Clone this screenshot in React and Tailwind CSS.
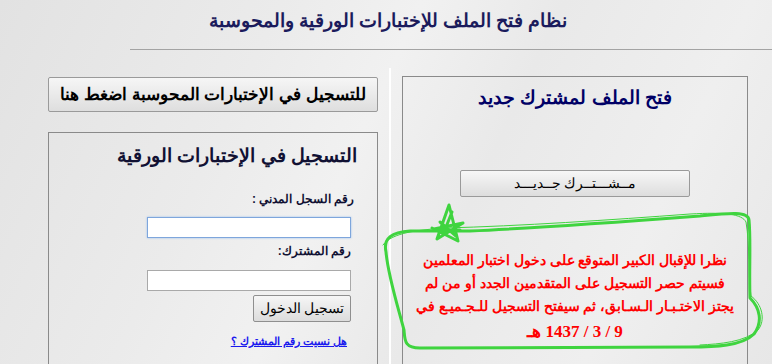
export default function App() {
  return (
    <div
      dir="rtl"
      className="relative w-[772px] h-[364px] overflow-hidden bg-[linear-gradient(115deg,#e2e2e2_0%,#ebebeb_30%,#f1f1f1_45%,#e9e9e9_60%,#efefef_80%,#e7e7e7_100%)] font-['Liberation_Sans',sans-serif]"
    >
      {/* Header */}
      <div className="pt-[8px] pl-[4px] text-center text-[18.5px] leading-[26px] font-bold text-[#1b1b5c]">
        نظام فتح الملف للإختبارات الورقية والمحوسبة
      </div>
      <div dir="ltr" className="mt-[15px] ml-[76px] w-[642px] h-px bg-[#a3a3a3]"></div>

      {/* Columns */}
      <div dir="ltr" className="mt-[26px] flex">
        {/* Left column */}
        <div dir="rtl" className="ml-[48px] w-[330px] pt-px">
          <button className="w-full h-[35px] border border-[#9a9a9a] rounded-[2px] bg-[linear-gradient(#f6f6f6,#dedede)] text-[17px] font-bold text-black">
            للتسجيل في الإختبارات المحوسبة اضغط هنا
          </button>

          <div className="mt-[20px] h-[240px] border border-b-0 border-[#8a8a8a] pt-[11px] pr-[20px]">
            <div className="text-[19px] leading-[24px] font-bold text-[#111133]">
              التسجيل في الإختبارات الورقية
            </div>
            <div className="pr-[3px]">
              <div className="mt-[22px] text-[12px] leading-[18px] font-bold text-[#111133]">
                رقم السجل المدني :
              </div>
            </div>
            <div className="pr-[6px]">
              <div className="mt-[9px] w-[204px] h-[21px] bg-white border border-[#7ea6dc] shadow-[0_0_2px_#9dc0ee]"></div>
            </div>
            <div className="pr-[6px]">
              <div className="mt-[4px] text-[12px] leading-[18px] font-bold text-[#111133]">
                رقم المشترك:
              </div>
            </div>
            <div className="pr-[6px]">
              <div className="mt-[10px] w-[204px] h-[21px] bg-white border border-[#a9a9a9]"></div>
              <button className="mt-[4px] w-[98px] h-[27px] border border-[#8f8f8f] rounded-[2px] bg-[linear-gradient(#f6f6f6,#dcdcdc)] text-[14px] text-black">
                تسجيل الدخول
              </button>
            </div>
            <div className="pr-[10px]">
              <a className="mt-[11px] inline-block text-[11px] leading-[16px] font-bold text-[#1a1aee] underline">
                هل نسيت رقم المشترك ؟
              </a>
            </div>
          </div>
        </div>

        {/* Separator */}
        <div className="ml-[11px] -mt-[8px] w-[2px] bg-white"></div>

        {/* Right box */}
        <div dir="rtl" className="ml-[11px] w-[346px] h-[300px] border border-b-0 border-[#8a8a8a] pt-[9px] flex flex-col items-center">
          <div className="text-[18.5px] leading-[24px] font-bold text-[#000066]">
            فتح الملف لمشترك جديد
          </div>
          <button className="mt-[60px] w-[230px] h-[27px] border border-[#9a9a9a] rounded-[2px] bg-[linear-gradient(#f7f7f7,#dddddd)] text-[14px] text-black">
            مــشـــتــرك جــديـــد
          </button>
          <div className="mt-[52px] whitespace-nowrap text-center text-[14px] leading-[23px] font-bold text-[#ff0000]">
            نظرا للإقبال الكبير المتوقع على دخول اختبار المعلمين
            <br />
            فسيتم حصر التسجيل على المتقدمين الجدد أو من لم
            <br />
            يجتز الاختـبـار الـسـابق، ثم سيفتح التسجيل للـجـميـع في
            <br />
            <span className="inline-block mt-[2px] text-[17px] font-['Liberation_Serif',serif]">9 / 3 / 1437 هـ</span>
          </div>
        </div>
      </div>

      {/* Hand-drawn green marking */}
      <svg
        className="absolute inset-0 pointer-events-none"
        width="772"
        height="364"
        viewBox="0 0 772 364"
        fill="none"
        strokeLinecap="round"
        strokeLinejoin="round"
      >
        <path
          d="M386 252 C383 238 392 232 410 231 L470 231 C540 228 620 222 700 216 C730 213 748 211 749 220 C751 240 749 270 750 298 C760 308 763 322 754 334 C742 346 715 347 690 347 L420 348 C404 348 405 340 404 330 C396 300 388 275 386 252 Z"
          stroke="#3fd43f"
          strokeWidth="3"
        />
        <path
          d="M383 245 C392 232 420 230 445 228 C520 226 610 220 690 214 C725 212 742 214 746 222 C750 245 748 275 751 296 C762 304 766 320 758 330 C745 342 720 344 700 345"
          stroke="#3fd43f"
          strokeWidth="1"
        />
        <path
          d="M434 229 L463 223 L437 239 L449 205 L458 241 L432 228 M440 222 L456 236 M444 232 L452 212 M438 230 L460 230"
          stroke="#3fd43f"
          strokeWidth="3"
        />
      </svg>
    </div>
  );
}
